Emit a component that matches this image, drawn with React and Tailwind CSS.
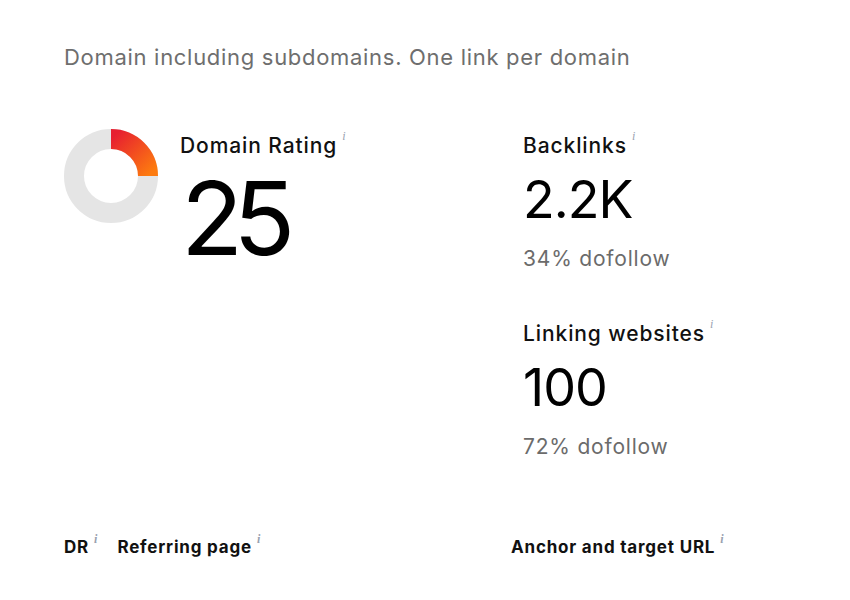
import React from 'react'

const font = { fontFamily: 'Inter, "Liberation Sans", sans-serif' }

function Info() {
  return (
    <span className="ml-[5px] -translate-y-[5px] inline-block text-[12px] italic tracking-normal text-gray-400" style={{ fontFamily: '"Liberation Serif", serif' }}>
      i
    </span>
  )
}

function Donut({ value }) {
  const r = 37
  const a = (value / 100) * 2 * Math.PI
  const ex = 47 + r * Math.sin(a)
  const ey = 47 - r * Math.cos(a)
  return (
    <svg width="94" height="94" viewBox="0 0 94 94">
      <defs>
        <linearGradient id="drGrad" x1="0" y1="0" x2="1" y2="1">
          <stop offset="0%" stopColor="#e71f30" />
          <stop offset="100%" stopColor="#fd7b0f" />
        </linearGradient>
      </defs>
      <circle cx="47" cy="47" r={r} fill="none" stroke="#e5e5e5" strokeWidth="20" />
      <path
        d={`M 47 ${47 - r} A ${r} ${r} 0 ${value > 50 ? 1 : 0} 1 ${ex} ${ey}`}
        fill="none"
        stroke="url(#drGrad)"
        strokeWidth="20"
      />
    </svg>
  )
}

function Metric({ label, value, sub }) {
  return (
    <div>
      <div className="flex items-start text-[21px] font-medium leading-none tracking-[0.9px] text-[#111]">
        {label}
        <Info />
      </div>
      <div className="mt-[18px] text-[52px] leading-none tracking-[-1px] text-black">{value}</div>
      {sub && <div className="mt-[22px] text-[21px] leading-none tracking-[0.8px] text-[#6b6b6b]">{sub}</div>}
    </div>
  )
}

export default function App() {
  return (
    <div className="h-[600px] w-[850px] bg-white px-[64px] pt-[46px]" style={font}>
      <p className="text-[22px] leading-none tracking-[0.7px] text-[#6e6e6e]">Domain including subdomains. One link per domain</p>

      <div className="mt-[61px] grid grid-cols-[459px_1fr]">
        {/* DR */}
        <div className="flex gap-[22px]">
          <Donut value={25} />
          <div className="pt-[6px]">
            <div className="flex items-start text-[21px] font-medium leading-none tracking-[0.9px] text-[#111]">
              Domain Rating
              <Info />
            </div>
            <div className="ml-[1px] mt-[11px] text-[102px] leading-none tracking-[-10px] text-black">25</div>
          </div>
        </div>

        {/* right side */}
        <div className="flex flex-col gap-[54px] pt-[6px]">
          <Metric label="Backlinks" value="2.2K" sub="34% dofollow" />
          <Metric label="Linking websites" value="100" sub="72% dofollow" />
        </div>
      </div>

      <div className="mt-[78px] grid grid-cols-[447px_1fr] text-[17px] font-bold tracking-[0.8px] text-[#111]">
        <div className="flex">
          <span className="flex items-start">DR<Info /></span>
          <span className="ml-[20px] flex items-start">Referring page<Info /></span>
        </div>
        <span className="flex items-start">Anchor and target URL<Info /></span>
      </div>
    </div>
  )
}
